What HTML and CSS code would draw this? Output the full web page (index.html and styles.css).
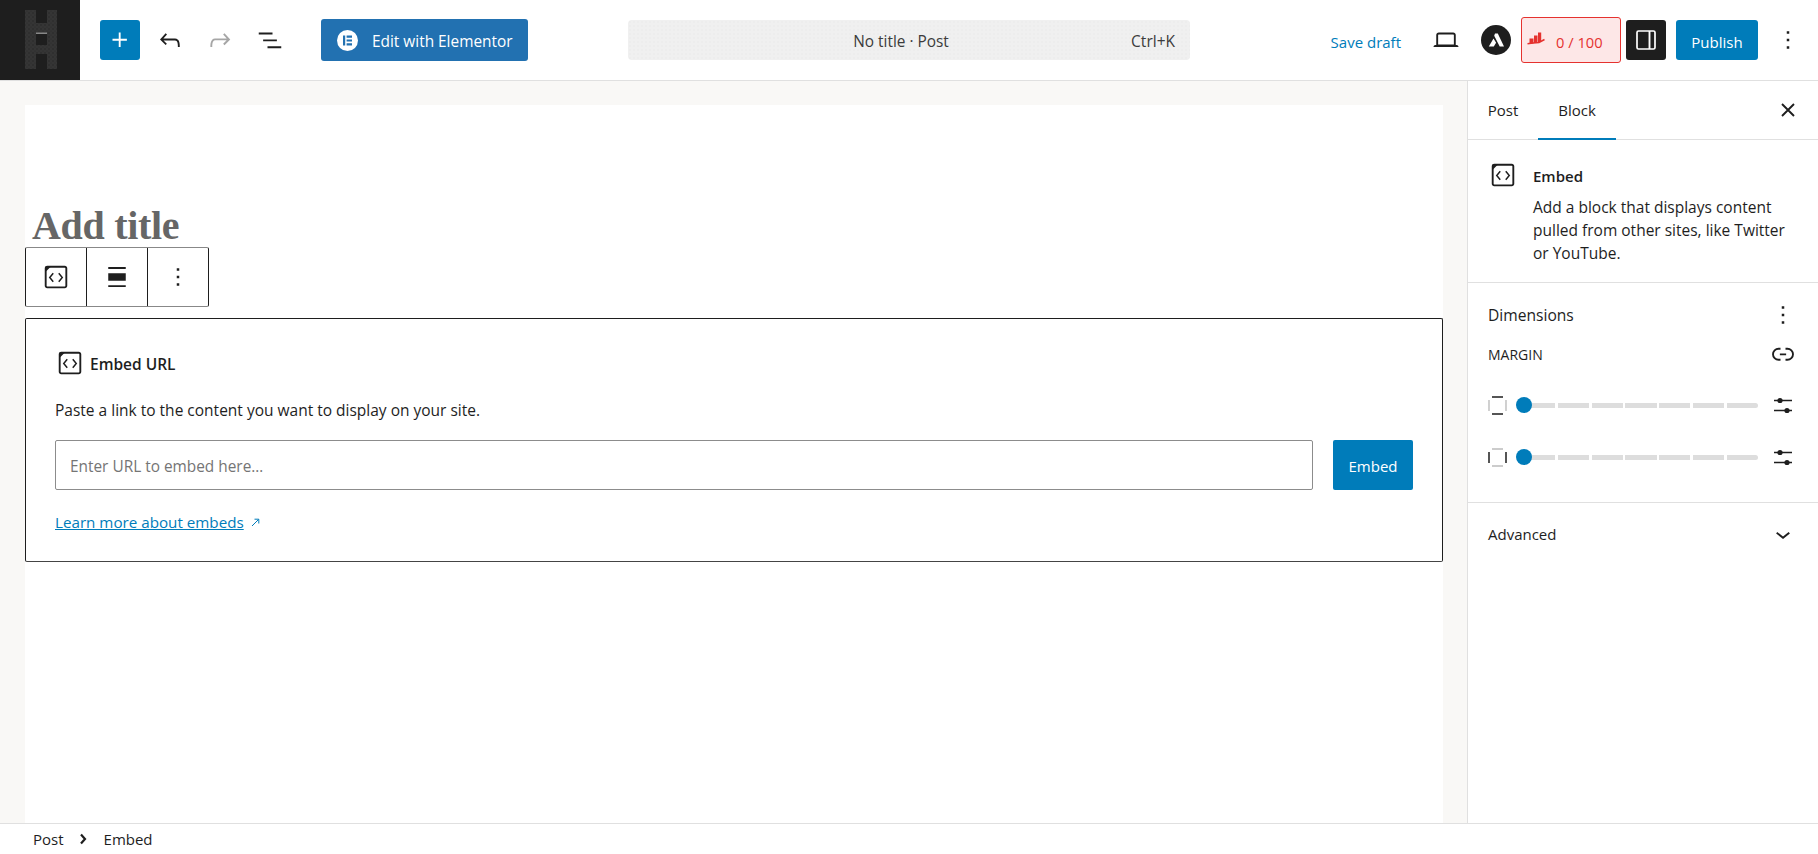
FILE: index.html
```html
<!DOCTYPE html>
<html lang="en">
<head>
<meta charset="utf-8">
<title>No title · Post</title>
<link rel="stylesheet" href="styles.css">
</head>
<body>
<div class="app">
  <header class="topbar">
    <div class="logo">
      <svg width="80" height="80" viewBox="0 0 80 80">
        <defs><pattern id="grain" width="4" height="4" patternUnits="userSpaceOnUse"><rect width="4" height="4" fill="#353535"/><circle cx="1" cy="1" r=".7" fill="#242424"/><circle cx="3" cy="3" r=".5" fill="#262626"/></pattern></defs>
        <path d="M25 10h11v13h11V10h10v59H47V54H36v15H25Z M36 33v12h11V33Z" fill="url(#grain)" fill-rule="evenodd"/>
        <rect x="36" y="32.5" width="11" height="1.5" fill="#888"/>
      </svg>
    </div>
    <button class="btn-plus"><svg class="ic" viewBox="0 0 24 24"><path fill="#fff" d="M11 12.5V17.5H12.5V12.5H17.5V11H12.5V6H11V11H6V12.5H11Z"/></svg></button>
    <button class="icon-btn first"><svg class="ic" viewBox="0 0 24 24"><path fill="#1e1e1e" d="M18.3 11.7c-.6-.6-1.4-.9-2.3-.9H6.7l2.9-3.3-1.1-1-4.5 5L8.5 16l1-1-2.7-2.7H16c.5 0 .9.2 1.3.5 1 1 1 3.4 1 4.5v.3h1.5v-.2c0-1.5 0-4.3-1.5-5.7z"/></svg></button>
    <button class="icon-btn"><svg class="ic" viewBox="0 0 24 24"><path fill="#a6a6a6" d="M15.6 6.5l-1.1 1 2.9 3.3H8c-.9 0-1.7.3-2.3.9-1.4 1.5-1.4 4.2-1.4 5.6v.2h1.5v-.3c0-1.1 0-3.5 1-4.5.3-.3.7-.5 1.3-.5h9.2L14.5 15l1.1 1.1 4.6-4.6-4.6-5z"/></svg></button>
    <button class="icon-btn"><svg class="ic" viewBox="0 0 24 24"><path fill="#1e1e1e" d="M3 6h11v1.5H3V6Zm3.5 5.5h11V13h-11v-1.5ZM21 17H10v1.5h11V17Z"/></svg></button>
    <button class="btn-elementor">
      <svg class="el-ic" viewBox="0 0 21 21"><circle cx="10.5" cy="10.5" r="10.5" fill="#fff"/><path fill="#2271b1" d="M6 5.500h2.200v10H6ZM9.600 5.500H15v2.200H9.600ZM9.600 9.400H15v2.200H9.600ZM9.600 13.300H15v2.200H9.600Z"/></svg>
      <span>Edit with Elementor</span>
    </button>
    <div class="search">
      <span class="search-title">No title · Post</span>
      <span class="search-key">Ctrl+K</span>
    </div>
    <div class="actions">
      <span class="save">Save draft</span>
      <button class="icon-btn laptop"><svg class="ic" viewBox="0 0 24 24"><path fill="#1e1e1e" d="M20.500 16h-.7V8c0-1.100-.9-2-2-2H6.200c-1.100 0-2 .9-2 2v8h-.7c-.8 0-1.500.7-1.500 1.500h20c0-.8-.7-1.500-1.500-1.500zM5.700 8c0-.3.2-.5.5-.5h11.600c.3 0 .5.2.5.5v7.600H5.700V8z"/></svg></button>
      <svg class="astra" viewBox="0 0 30 30"><circle cx="15" cy="15" r="15" fill="#1e1e1e"/><path fill="#fff" d="M14 8.500h2.800L23 21.500h-4.300l-5.500-10.700ZM12.500 13.500l2.600 4.300-2.300 3.700H7.800Z"/></svg>
      <div class="rank">
        <svg class="rank-ic" viewBox="0 0 18 13"><path fill="#e5322f" d="M2.500 6.500H6.500V11.500H2.500ZM7 3.500h3.500V11H7ZM11 .5h3.200V10H11Z"/><path d="M.5 11.800 6 11 12 10.500 17.500 7.500" fill="none" stroke="#e5322f" stroke-width="1.500"/></svg>
        <span>0 / 100</span>
      </div>
      <button class="btn-toggle"><svg class="toggle-ic" viewBox="0 0 20 20"><rect x="1" y="1" width="18" height="18" rx="1.500" fill="none" stroke="#fff" stroke-width="1.700"/><path d="M13.500 1v18" stroke="#fff" stroke-width="1.900"/></svg></button>
      <button class="btn-publish">Publish</button>
      <button class="icon-btn kebab"><svg class="ic" viewBox="0 0 24 24"><path fill="#1e1e1e" d="M13 19h-2v-2h2v2zm0-6h-2v-2h2v2zm0-6h-2V5h2v2z"/></svg></button>
    </div>
  </header>

  <div class="main">
    <main class="canvas">
      <div class="sheet">
        <h1 class="post-title">Add title</h1>
        <div class="block-toolbar">
          <button class="tool"><svg class="ic" viewBox="0 0 24 24"><path fill="#1e1e1e" d="M19 3H5c-1.105 0-2 .895-2 2v14c0 1.105.895 2 2 2h14c1.105 0 2-.895 2-2V5c0-1.105-.895-2-2-2zM5 4.500h14c.276 0 .5.224.5.5v14c0 .276-.224.5-.5.5H5c-.276 0-.5-.224-.5-.5V5c0-.276.224-.5.5-.5z"/><path fill="#1e1e1e" d="M3.500 3.500H8L3.500 8Z"/><path fill="none" stroke="#1e1e1e" stroke-width="1.200" d="M9.800 9 7 12.400l2.800 3.400M14.200 9l2.800 3.400-2.800 3.400"/></svg></button>
          <button class="tool"><svg class="ic" viewBox="0 0 24 24"><path fill="#1e1e1e" d="M19 5.500H5V4h14v1.500ZM19 20H5v-1.500h14V20ZM5 9h14v6H5V9Z"/></svg></button>
          <button class="tool"><svg class="ic" viewBox="0 0 24 24"><path fill="#1e1e1e" d="M13 19h-2v-2h2v2zm0-6h-2v-2h2v2zm0-6h-2V5h2v2z"/></svg></button>
        </div>
        <section class="embed-box">
          <div class="embed-head">
            <svg class="ic" viewBox="0 0 24 24"><path fill="#1e1e1e" d="M19 3H5c-1.105 0-2 .895-2 2v14c0 1.105.895 2 2 2h14c1.105 0 2-.895 2-2V5c0-1.105-.895-2-2-2zM5 4.500h14c.276 0 .5.224.5.5v14c0 .276-.224.5-.5.5H5c-.276 0-.5-.224-.5-.5V5c0-.276.224-.5.5-.5z"/><path fill="#1e1e1e" d="M3.500 3.500H8L3.500 8Z"/><path fill="none" stroke="#1e1e1e" stroke-width="1.200" d="M9.800 9 7 12.400l2.800 3.400M14.200 9l2.800 3.400-2.800 3.400"/></svg>
            <span class="embed-label">Embed URL</span>
          </div>
          <p class="embed-text">Paste a link to the content you want to display on your site.</p>
          <div class="embed-row">
            <input class="embed-input" type="text" placeholder="Enter URL to embed here…">
            <button class="btn-embed">Embed</button>
          </div>
          <p class="embed-learn"><a class="learn-link">Learn more about embeds</a><svg class="ext" viewBox="0 0 9 9"><path d="M1 8 7.500 1.500M3.500 1.200h4.300v4.300" fill="none" stroke="#007cba" stroke-width="1"/></svg></p>
        </section>
      </div>
    </main>

    <aside class="sidebar">
      <div class="tabs">
        <span class="tab tab-post">Post</span>
        <span class="tab tab-block">Block</span>
        <button class="icon-btn close"><svg class="ic" viewBox="0 0 24 24"><path fill="none" stroke="#1e1e1e" stroke-width="1.500" d="M7.200 7.200l9.600 9.600M16.800 7.200l-9.600 9.600"/></svg></button>
      </div>
      <div class="block-card">
        <svg class="ic" viewBox="0 0 24 24"><path fill="#1e1e1e" d="M19 3H5c-1.105 0-2 .895-2 2v14c0 1.105.895 2 2 2h14c1.105 0 2-.895 2-2V5c0-1.105-.895-2-2-2zM5 4.500h14c.276 0 .5.224.5.5v14c0 .276-.224.5-.5.5H5c-.276 0-.5-.224-.5-.5V5c0-.276.224-.5.5-.5z"/><path fill="#1e1e1e" d="M3.500 3.500H8L3.500 8Z"/><path fill="none" stroke="#1e1e1e" stroke-width="1.200" d="M9.800 9 7 12.400l2.800 3.400M14.200 9l2.800 3.400-2.800 3.400"/></svg>
        <div class="card-body">
          <h2 class="card-title">Embed</h2>
          <p class="card-desc">Add a block that displays content pulled from other sites, like Twitter or YouTube.</p>
        </div>
      </div>
      <div class="panel-dim">
        <div class="dim-head">
          <h2 class="panel-title dim-title">Dimensions</h2>
          <svg class="ic" viewBox="0 0 24 24"><path fill="#1e1e1e" d="M13 19h-2v-2h2v2zm0-6h-2v-2h2v2zm0-6h-2V5h2v2z"/></svg>
        </div>
        <div class="margin-head">
          <span class="margin-label">MARGIN</span>
          <svg class="ic" viewBox="0 0 24 24"><path fill="#1e1e1e" d="M10 17.389H8.444A5.194 5.194 0 1 1 8.444 7H10v1.500H8.444a3.694 3.694 0 0 0 0 7.389H10v1.500ZM14 7h1.556a5.194 5.194 0 0 1 0 10.390H14v-1.500h1.556a3.694 3.694 0 0 0 0-7.390H14V7Zm-4.500 6h5v-1.500h-5V13Z"/></svg>
        </div>
        <div class="slider-row">
          <svg class="side-ic" viewBox="0 0 19 19"><path d="M4 1h11M4 18h11" stroke="#1e1e1e" stroke-width="1.500"/><path d="M1 4v11M18 4v11" stroke="#ccc" stroke-width="1.800"/></svg>
          <div class="track"><i></i><i></i><i></i><i></i><i></i><i></i><i></i><span class="thumb"></span></div>
          <svg class="tune-ic" viewBox="0 0 30 30"><path d="M6 10.500h18M6 20.500h18" stroke="#1e1e1e" stroke-width="1.500"/><circle cx="12" cy="10.500" r="2.600" fill="#1e1e1e"/><circle cx="19" cy="20.500" r="2.600" fill="#1e1e1e"/></svg>
        </div>
        <div class="slider-row">
          <svg class="side-ic" viewBox="0 0 19 19"><path d="M4 1h11M4 18h11" stroke="#ccc" stroke-width="1.800"/><path d="M1 4v11M18 4v11" stroke="#1e1e1e" stroke-width="1.500"/></svg>
          <div class="track"><i></i><i></i><i></i><i></i><i></i><i></i><i></i><span class="thumb"></span></div>
          <svg class="tune-ic" viewBox="0 0 30 30"><path d="M6 10.500h18M6 20.500h18" stroke="#1e1e1e" stroke-width="1.500"/><circle cx="12" cy="10.500" r="2.600" fill="#1e1e1e"/><circle cx="19" cy="20.500" r="2.600" fill="#1e1e1e"/></svg>
        </div>
      </div>
      <div class="panel-adv">
        <h2 class="panel-title">Advanced</h2>
        <svg class="ic" viewBox="0 0 24 24"><path fill="#1e1e1e" d="M17.500 11.600L12 16l-5.500-4.400.9-1.200L12 14l4.500-3.600 1 1.200z"/></svg>
      </div>
    </aside>
  </div>

  <footer class="statusbar">
    <span>Post</span>
    <svg class="crumb-ic" viewBox="0 0 8 12"><path d="M2 1.500 6 6l-4 4.500" fill="none" stroke="#1e1e1e" stroke-width="2.200"/></svg>
    <span>Embed</span>
  </footer>
</div>
</body>
</html>
```

FILE: styles.css
```css
* { box-sizing: border-box; }
html, body { margin: 0; height: 100%; overflow: hidden; }
body { font-family: "Open Sans", "Noto Sans", sans-serif; font-size: 15px; color: #1e1e1e; background: #fff; }
button { font: inherit; border: 0; padding: 0; background: none; cursor: pointer; color: inherit; display: flex; align-items: center; justify-content: center; }
h1, h2, p { margin: 0; }
.ic { width: 30px; height: 30px; display: block; flex: none; }

.app { height: 854px; display: flex; flex-direction: column; }

/* top bar */
.topbar { height: 81px; flex: none; display: flex; align-items: center; border-bottom: 1px solid #e0e0e0; padding-right: 10px; background: #fff; }
.logo { width: 80px; height: 80px; background: #1e1e1e; flex: none; }
.logo svg { display: block; }
.btn-plus { width: 40px; height: 40px; margin-left: 20px; background: #007cba; border-radius: 3px; }
.icon-btn { width: 40px; height: 40px; margin-left: 10px; flex: none; }
.btn-elementor { width: 207px; height: 42px; margin-left: 31px; background: #2271b1; border-radius: 3px; color: #fff; justify-content: flex-start; padding-left: 16px; font-weight: 500; font-size: 15.4px; }
.el-ic { width: 21px; height: 21px; margin-right: 14px; }
.btn-elementor span { padding-top: 2px; }
.search { width: 562px; height: 40px; margin-left: 100px; border-radius: 4px; display: flex; align-items: center; position: relative; justify-content: center; color: #3c3c3c; padding: 3px 16px 0 0; background-color: #f0f0f0; background-image: radial-gradient(circle, #ededed 1px, transparent 1px); background-size: 4px 4px; }
.search-title { font-size: 15.4px; }
.search-key { position: absolute; right: 15px; top: 10px; font-size: 15.5px; }
.actions { margin-left: auto; display: flex; align-items: center; }
.save { color: #007cba; margin-right: 25px; padding-top: 3px; }
.laptop { margin-left: 0; }
.astra { width: 30px; height: 30px; margin-left: 15px; display: block; }
.rank { width: 100px; height: 46px; margin-left: 10px; background: #fde7e7; border: 1px solid #e5322f; border-radius: 3px; color: #e5322f; display: flex; align-items: center; padding-left: 5px; font-size: 14.7px; }
.rank-ic { width: 18px; height: 13px; margin-right: 11px; margin-top: -4px; }
.rank span { padding-top: 3px; }
.btn-toggle { width: 40px; height: 40px; margin-left: 5px; background: #1e1e1e; border-radius: 3px; }
.toggle-ic { width: 20px; height: 20px; display: block; }
.btn-publish { width: 82px; height: 40px; margin-left: 10px; background: #007cba; color: #fff; border-radius: 3px; font-weight: 500; padding-top: 3px; }
.kebab { margin-left: 10px; }

/* layout */
.main { flex: 1; display: flex; min-height: 0; }
.canvas { flex: 1; min-width: 0; background: #f9f8f6; padding: 24px 24px 0 25px; }
.sheet { height: 100%; background: #fff; display: flex; flex-direction: column; }

.post-title { font-family: "Liberation Serif", serif; font-weight: 700; font-size: 40px; letter-spacing: -.3px; line-height: 48px; color: #666; padding: 97px 0 0 7px; height: 142px; }
.block-toolbar { width: 184px; height: 60px; display: flex; background: #fff; border: 1px solid #1e1e1e; border-top-color: #888; border-bottom-color: #888; border-radius: 2px; flex: none; }
.tool { width: 61px; flex: none; border-right: 1px solid #1e1e1e; }
.tool:last-child { width: 60px; border-right: 0; }

.embed-box { margin-top: 11px; height: 244px; border: 1px solid #1e1e1e; border-bottom-color: #444; border-radius: 2px; padding: 29px 29px 0; flex: none; }
.embed-head { display: flex; align-items: center; }
.embed-label { font-weight: 600; font-size: 15.5px; margin-left: 5px; padding-top: 2px; }
.embed-text { margin-top: 20px; line-height: 25px; font-size: 15.5px; }
.embed-row { display: flex; gap: 20px; margin-top: 17px; }
.embed-input { flex: 1; height: 50px; border: 1px solid #8c8c8c; border-radius: 2px; padding: 2px 14px 0; font: inherit; font-size: 15.4px; color: #1e1e1e; }
.embed-input::placeholder { color: #757575; opacity: 1; }
.btn-embed { width: 80px; height: 50px; background: #007cba; color: #fff; border-radius: 2px; font-weight: 500; padding-top: 2px; }
.embed-learn { margin-top: 20px; line-height: 24px; display: flex; align-items: center; font-size: 15.2px; }
.learn-link { color: #007cba; text-decoration: underline; }
.ext { width: 9px; height: 9px; margin-left: 7px; }

/* sidebar */
.sidebar { width: 351px; flex: none; border-left: 1px solid #e0e0e0; background: #fff; }
.tabs { height: 59px; display: flex; align-items: center; border-bottom: 1px solid #e0e0e0; padding-right: 10px; }
.tab { height: 59px; padding-top: 2px; display: flex; align-items: center; justify-content: center; border-bottom: 2px solid transparent; }
.tab-post { width: 70px; }
.tab-block { width: 78px; border-bottom-color: #007cba; }
.close { margin-left: auto; }

.block-card { height: 143px; border-bottom: 1px solid #e0e0e0; padding: 20px 20px 0; display: flex; gap: 15px; }
.card-title { font-size: 15px; font-weight: 600; line-height: 20px; margin-top: 6px; }
.card-desc { line-height: 23px; margin-top: 10px; font-size: 15.5px; }

.panel-dim { height: 220px; border-bottom: 1px solid #e0e0e0; padding: 17px 20px 0; }
.dim-head, .margin-head { display: flex; justify-content: space-between; align-items: center; height: 30px; }
.panel-title { font-size: 15px; font-weight: 500; }
.dim-title { font-size: 15.6px; }
.margin-head { margin-top: 9px; }
.margin-label { font-size: 14px; font-weight: 500; }
.slider-row { display: flex; align-items: center; height: 30px; margin-top: 22px; }
.margin-head + .slider-row { margin-top: 21px; }
.side-ic { width: 19px; height: 19px; flex: none; }
.track { flex: 1; margin: 0 10px 0 17px; height: 5px; display: flex; gap: 2.5px; position: relative; }
.track i { flex: 1; background: #ddd; }
.track i:last-of-type { border-radius: 0 3px 3px 0; }
.thumb { position: absolute; left: -8px; top: -5.5px; width: 16px; height: 16px; border-radius: 50%; background: #007cba; }
.tune-ic { width: 30px; height: 30px; flex: none; }
.panel-adv { height: 62px; padding: 0 20px; display: flex; align-items: center; justify-content: space-between; }

/* status bar */
.statusbar { height: 31px; flex: none; border-top: 1px solid #e0e0e0; display: flex; align-items: center; padding-left: 33px; background: #fff; }
.crumb-ic { width: 8px; height: 12px; margin: 0 17px 0 15px; }
```
